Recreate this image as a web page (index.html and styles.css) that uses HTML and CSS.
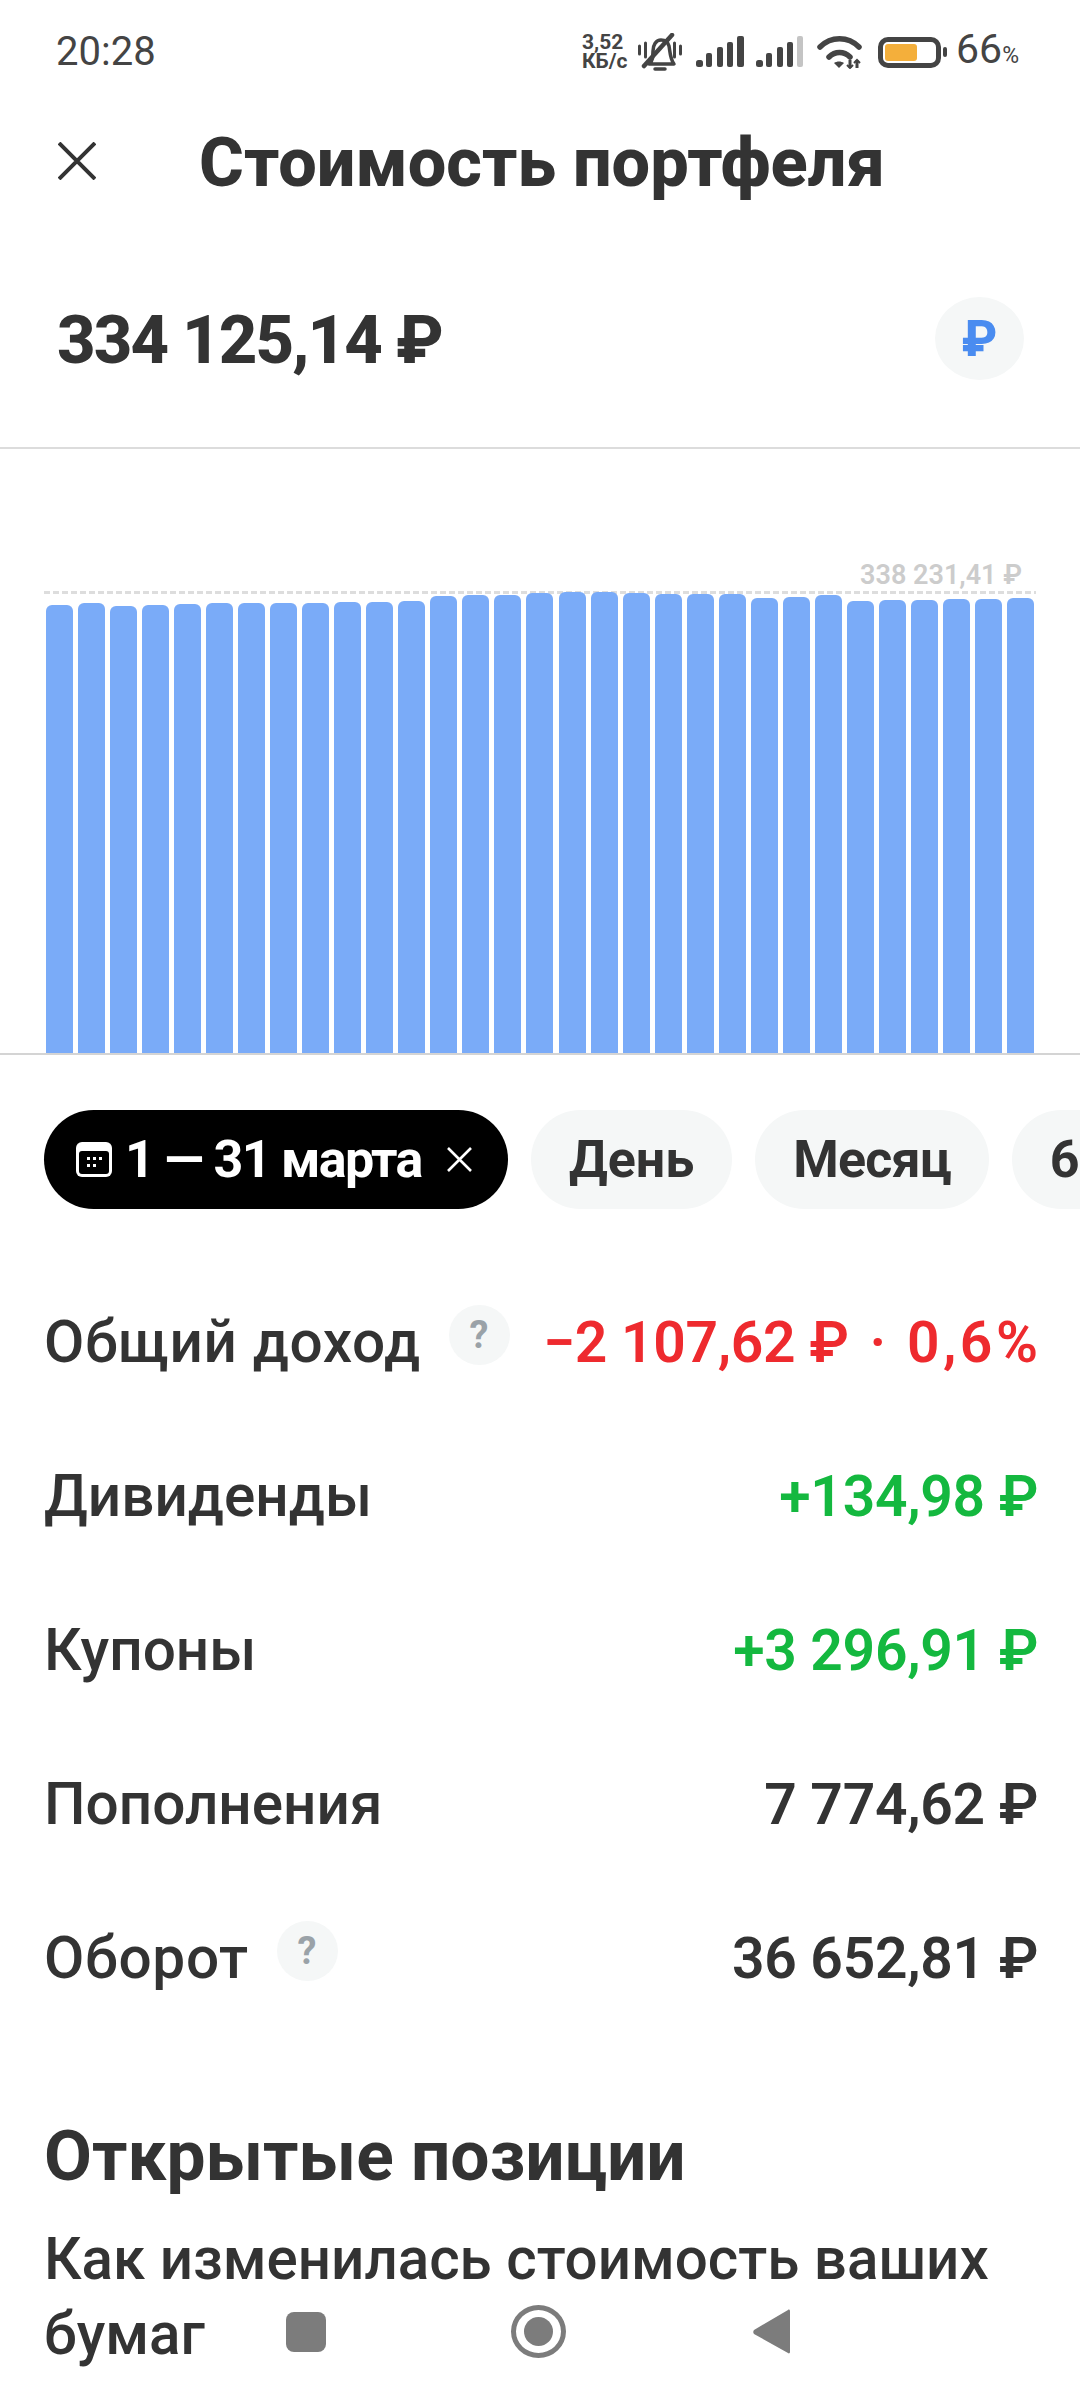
FILE: index.html
```html
<!DOCTYPE html>
<html lang="ru">
<head>
  <meta charset="UTF-8">
  <title>Стоимость портфеля</title>
  <link rel="stylesheet" href="styles.css">
</head>
<body>
  <div class="status">
    <span class="time">20:28</span>
    <div class="status-icons">
      <span class="speed">3,52<br>КБ/с</span>
      <svg class="ic-bell" width="44" height="38" viewBox="0 0 44 38" fill="none" stroke="#444" stroke-linecap="round">
        <path d="M1.5 13v8M7.5 10v14M36.5 10v14M42.5 13v8" stroke-width="3"/>
        <path d="M11 31c4-3 4-8 4-13 0-6 3-11 8-11 4 0 7 2 8 6 1 5 1 13 5 18z" stroke-width="3.5" stroke-linejoin="round"/>
        <path d="M6 33L34 2" stroke-width="4.5"/>
        <path d="M17 36h10" stroke-width="3.5"/>
      </svg>
      <svg class="ic-signal" width="48" height="32" viewBox="0 0 48 32" fill="#444">
        <rect x="0" y="24" width="7" height="7" rx="2.5"/><rect x="10" y="17" width="6" height="14" rx="2"/><rect x="21" y="11" width="6" height="20" rx="2"/><rect x="31" y="6" width="6" height="25" rx="2"/><rect x="41" y="0" width="7" height="31" rx="2"/>
      </svg>
      <svg class="ic-signal2" width="48" height="32" viewBox="0 0 48 32" fill="#444">
        <rect x="0" y="24" width="7" height="7" rx="2.5"/><rect x="10" y="17" width="6" height="14" rx="2"/><rect x="21" y="11" width="6" height="20" rx="2"/><rect x="31" y="6" width="6" height="25" rx="2"/><rect x="41" y="0" width="6" height="31" rx="2" fill="#c4c4c4"/>
      </svg>
      <svg class="ic-wifi" width="46" height="33" viewBox="0 0 46 33" fill="none" stroke="#444" stroke-width="5.5" stroke-linecap="round">
        <path d="M3 11C14 0 31 0 42 11"/>
        <path d="M12 21c6-6 15-6 21 0"/>
        <path d="M17 27c3-2 7-2 10 0l-5 5z" fill="#444" stroke="none"/>
        <path d="M33 24v8M40 24v8" stroke-width="3" stroke-linecap="butt"/>
        <path d="M30 29l3 3 3-3M37 27l3-3 3 3" stroke-width="2" stroke-linecap="butt"/>
      </svg>
      <div class="battery"><div class="battery-fill"></div></div>
      <div class="battery-nub"></div>
      <span class="percent">66<small>%</small></span>
    </div>
  </div>

  <div class="topbar">
    <svg class="ic-close" width="38" height="38" viewBox="0 0 38 38" stroke="#333" stroke-width="4" fill="none"><path d="M1 1l36 36M37 1L1 37"/></svg>
    <h1 class="title">Стоимость портфеля</h1>
  </div>

  <div class="balance">
    <span class="balance-sum">334 125,14 ₽</span>
    <span class="currency">₽</span>
  </div>

  <div class="chart">
    <div class="chart-max">338 231,41 ₽</div>
    <div class="plot">
      <div class="bar" style="height:448px"></div>
      <div class="bar" style="height:450px"></div>
      <div class="bar" style="height:447px"></div>
      <div class="bar" style="height:448px"></div>
      <div class="bar" style="height:449px"></div>
      <div class="bar" style="height:450px"></div>
      <div class="bar" style="height:450px"></div>
      <div class="bar" style="height:450px"></div>
      <div class="bar" style="height:450px"></div>
      <div class="bar" style="height:451px"></div>
      <div class="bar" style="height:451px"></div>
      <div class="bar" style="height:452px"></div>
      <div class="bar" style="height:457px"></div>
      <div class="bar" style="height:458px"></div>
      <div class="bar" style="height:458px"></div>
      <div class="bar" style="height:460px"></div>
      <div class="bar" style="height:461px"></div>
      <div class="bar" style="height:461px"></div>
      <div class="bar" style="height:460px"></div>
      <div class="bar" style="height:459px"></div>
      <div class="bar" style="height:459px"></div>
      <div class="bar" style="height:459px"></div>
      <div class="bar" style="height:455px"></div>
      <div class="bar" style="height:456px"></div>
      <div class="bar" style="height:458px"></div>
      <div class="bar" style="height:452px"></div>
      <div class="bar" style="height:453px"></div>
      <div class="bar" style="height:453px"></div>
      <div class="bar" style="height:454px"></div>
      <div class="bar" style="height:454px"></div>
      <div class="bar" style="height:455px"></div>
    </div>
  </div>

  <div class="chips">
    <div class="chip chip-active">
      <svg class="ic-cal" width="36" height="35" viewBox="0 0 36 35">
        <rect x="0" y="0" width="36" height="35" rx="6" fill="#fff"/>
        <rect x="3" y="9" width="30" height="23" rx="3" fill="#000"/>
        <g fill="#fff"><rect x="11" y="15" width="3" height="3"/><rect x="17" y="15" width="3" height="3"/><rect x="23" y="15" width="3" height="3"/><rect x="11" y="22" width="3" height="3"/><rect x="17" y="22" width="3" height="3"/></g>
      </svg>
      <span class="chip-range">1 — 31 марта</span>
      <svg class="ic-chip-x" width="25" height="25" viewBox="0 0 25 25" stroke="#fff" stroke-width="2.6" fill="none"><path d="M1 1l23 23M24 1L1 24"/></svg>
    </div>
    <div class="chip">День</div>
    <div class="chip chip-month">Месяц</div>
    <div class="chip">6 месяцев</div>
  </div>

  <div class="rows">
    <div class="row">
      <div class="row-label row-label-hint">Общий доход <span class="hint">?</span></div>
      <div class="row-value red">−2 107,62 ₽<span class="sep">·</span><span class="pct">0,6%</span></div>
    </div>
    <div class="row">
      <div class="row-label">Дивиденды</div>
      <div class="row-value green">+134,98 ₽</div>
    </div>
    <div class="row">
      <div class="row-label">Купоны</div>
      <div class="row-value green">+3 296,91 ₽</div>
    </div>
    <div class="row">
      <div class="row-label">Пополнения</div>
      <div class="row-value">7 774,62 ₽</div>
    </div>
    <div class="row">
      <div class="row-label row-label-hint">Оборот <span class="hint">?</span></div>
      <div class="row-value">36 652,81 ₽</div>
    </div>
  </div>

  <div class="positions">
    <h2>Открытые позиции</h2>
    <p>Как изменилась стоимость ваших бумаг</p>
  </div>

  <div class="navbar">
    <div class="nav-square"></div>
    <div class="nav-home"><div class="nav-dot"></div></div>
    <svg width="37" height="45" viewBox="0 0 37 45"><path d="M35 1c1-1 2 0 2 1v41c0 1-1 2-2 1L1 25c-1-1-1-3 0-4z" fill="#7c7c7c"/></svg>
  </div>
</body>
</html>
```

FILE: styles.css
```css
* {
  box-sizing: border-box;
}

html, body {
  margin: 0;
  padding: 0;
}

body {
  width: 1080px;
  height: 2400px;
  overflow: hidden;
  position: relative;
  background-color: #fff;
  color: #333;
  font-family: Roboto, "Noto Sans", sans-serif;
}

.status {
  height: 100px;
  padding: 32px 61px 0 56px;
  display: flex;
  justify-content: space-between;
  align-items: flex-start;
  color: #444;
}

.time {
  font-size: 40px;
  line-height: 40px;
}

.status-icons {
  display: flex;
  align-items: center;
  height: 40px;
}

.speed {
  font-size: 21px;
  line-height: 19px;
  font-weight: 700;
  width: 56px;
  flex-shrink: 0;
}

.ic-bell {
  margin-right: 14px;
}

.ic-signal {
  margin-right: 12px;
}

.ic-signal2 {
  margin-right: 13px;
}

.ic-wifi {
  margin-right: 15px;
}

.battery {
  width: 63px;
  height: 31px;
  border: 5px solid #444;
  border-radius: 10px;
  padding: 2px;
}

.battery-fill {
  width: 32px;
  height: 100%;
  background-color: #f4af3b;
  border-radius: 3px;
}

.battery-nub {
  width: 4px;
  height: 10px;
  margin-left: 2px;
  margin-right: 9px;
  background-color: #444;
  border-radius: 2px;
}

.percent {
  font-size: 41px;
  line-height: 40px;
}

.percent small {
  font-size: 23px;
}

.topbar {
  height: 122px;
  padding: 4px 0 0 58px;
  display: flex;
  align-items: center;
}

.ic-close {
  margin: -4px 103px 0 0;
}

.title {
  margin: 0;
  font-size: 68.5px;
  font-weight: 800;
  line-height: 76px;
  white-space: nowrap;
}

.balance {
  height: 227px;
  padding: 8px 56px 0 57px;
  display: flex;
  justify-content: space-between;
  align-items: center;
  border-bottom: 2px solid #dcdcdc;
}

.balance-sum {
  margin-top: 2px;
  font-size: 67px;
  font-weight: 800;
  letter-spacing: -1.9px;
}

.currency {
  width: 89px;
  height: 83px;
  border-radius: 50%;
  background-color: #f5f7f7;
  color: #4a8cf0;
  font-size: 50px;
  font-weight: 800;
  display: flex;
  align-items: center;
  justify-content: center;
}

.chart {
  height: 606px;
  padding: 111px 44px 0;
  border-bottom: 2px solid #d4d4d4;
  display: flex;
  flex-direction: column;
}

.chart-max {
  height: 31px;
  padding-right: 14px;
  text-align: right;
  font-size: 27px;
  line-height: 30px;
  font-weight: 600;
  color: #cccccc;
}

.plot {
  flex: 1;
  padding: 0 2px;
  display: flex;
  justify-content: space-between;
  align-items: flex-end;
  background-image: repeating-linear-gradient(90deg, #dddddd 0 6px, transparent 6px 9px);
  background-size: 100% 3px;
  background-repeat: no-repeat;
}

.bar {
  width: 27px;
  background-color: #7aabf8;
  border-radius: 6px 6px 0 0;
}

.chips {
  display: flex;
  gap: 23px;
  margin-top: 55px;
  padding-left: 44px;
  white-space: nowrap;
}

.chip {
  height: 99px;
  padding: 0 38px;
  border-radius: 50px;
  background-color: #f5f7f7;
  font-size: 52px;
  font-weight: 700;
  line-height: 99px;
  flex-shrink: 0;
}

.chip-month {
  letter-spacing: -0.8px;
}

.chip-active {
  display: flex;
  align-items: center;
  width: 464px;
  padding: 0 36px 0 32px;
  background-color: #000;
  color: #fff;
}

.chip-range {
  letter-spacing: -1.7px;
}

.ic-cal {
  margin-right: 13px;
}

.ic-chip-x {
  margin-left: auto;
}

.rows {
  margin-top: 56px;
}

.row {
  height: 154px;
  padding: 0 42px 0 44px;
  display: flex;
  justify-content: space-between;
  align-items: center;
  font-size: 57px;
  white-space: nowrap;
}

.row-label {
  font-size: 58.5px;
  font-weight: 500;
  display: flex;
  align-items: center;
}

.row-label-hint {
  letter-spacing: 0.65px;
}

.row-value {
  font-weight: 600;
  letter-spacing: -0.3px;
}

.sep {
  margin: 0 21px;
}

.pct {
  letter-spacing: 3.5px;
  margin-right: -3.5px;
}

.red {
  color: #ee2a2e;
}

.green {
  color: #14b83f;
}

.hint {
  width: 61px;
  height: 60px;
  margin-left: 28px;
  margin-top: -14px;
  border-radius: 50%;
  background-color: #f5f7f7;
  color: #9aa2a8;
  font-size: 38px;
  font-weight: 700;
  display: flex;
  align-items: center;
  justify-content: center;
}

.positions {
  padding: 84px 44px 0;
}

.positions h2 {
  margin: 0;
  font-size: 69.5px;
  line-height: 76px;
  font-weight: 700;
}

.positions p {
  margin: 27px 0 0;
  font-size: 58.3px;
  line-height: 75px;
  font-weight: 500;
}

.navbar {
  position: absolute;
  left: 286px;
  top: 2305px;
  width: 504px;
  height: 53px;
  display: flex;
  justify-content: space-between;
  align-items: center;
}

.nav-square {
  width: 40px;
  height: 40px;
  border-radius: 8px;
  background-color: #7c7c7c;
}

.nav-home {
  width: 55px;
  height: 53px;
  margin-left: 185px;
  margin-right: 187px;
  border: 5px solid #7c7c7c;
  border-radius: 50%;
  display: flex;
  align-items: center;
  justify-content: center;
}

.nav-dot {
  width: 29px;
  height: 29px;
  border-radius: 50%;
  background-color: #7c7c7c;
}
```
